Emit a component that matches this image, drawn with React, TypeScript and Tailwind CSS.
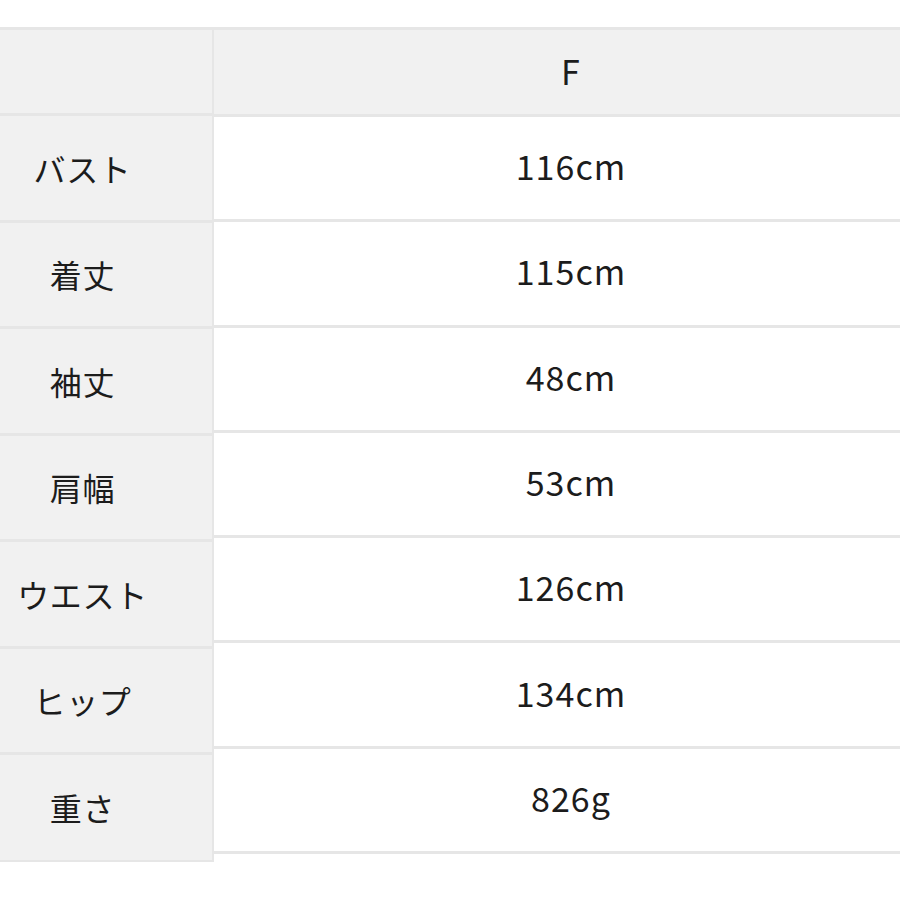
const rows = [
  { label: "バスト", value: "116cm" },
  { label: "着丈", value: "115cm" },
  { label: "袖丈", value: "48cm" },
  { label: "肩幅", value: "53cm" },
  { label: "ウエスト", value: "126cm" },
  { label: "ヒップ", value: "134cm" },
  { label: "重さ", value: "826g" },
];

const font = { fontFamily: '"Noto Sans CJK JP", "Noto Sans", sans-serif' };

export default function App() {
  return (
    <div className="h-[900px] w-[900px] overflow-hidden bg-white pt-[27px]" style={font}>
      <div className="ml-[-49px] flex w-[976px] items-start text-[32px] text-[#1c1c1c]">
        {/* label column */}
        <div className="flex w-[263px] flex-col border-t-[3px] border-r-[2px] border-[#e6e6e6] bg-[#f1f1f1]">
          <div className="h-[86px] border-b-[3px] border-[#e6e6e6]" />
          {rows.map((r, i) => (
            <div
              key={r.label}
              className={
                i < rows.length - 1
                  ? "flex h-[106.5px] items-center justify-center border-b-[3px] border-[#e6e6e6] pl-[2px]"
                  : "flex h-[106.5px] items-center justify-center border-b-[2px] border-[#e6e6e6] pl-[2px]"
              }
            >
              <span className="leading-none tracking-[0.02em]">{r.label}</span>
            </div>
          ))}
        </div>

        {/* value column */}
        <div className="flex flex-1 flex-col border-t-[3px] border-[#e6e6e6]">
          <div className="flex h-[87px] items-center justify-center border-b-[3px] border-[#e6e6e6] bg-[#f1f1f1] pb-[2px]">
            <span className="text-[34px] leading-none">F</span>
          </div>
          {rows.map((r) => (
            <div
              key={r.label}
              className="flex h-[105.3px] items-center justify-center border-b-[3px] border-[#e6e6e6] bg-white pb-[4px] pl-[1px]"
            >
              <span className="text-[34px] leading-none tracking-[0.03em]">{r.value}</span>
            </div>
          ))}
        </div>
      </div>
    </div>
  );
}
